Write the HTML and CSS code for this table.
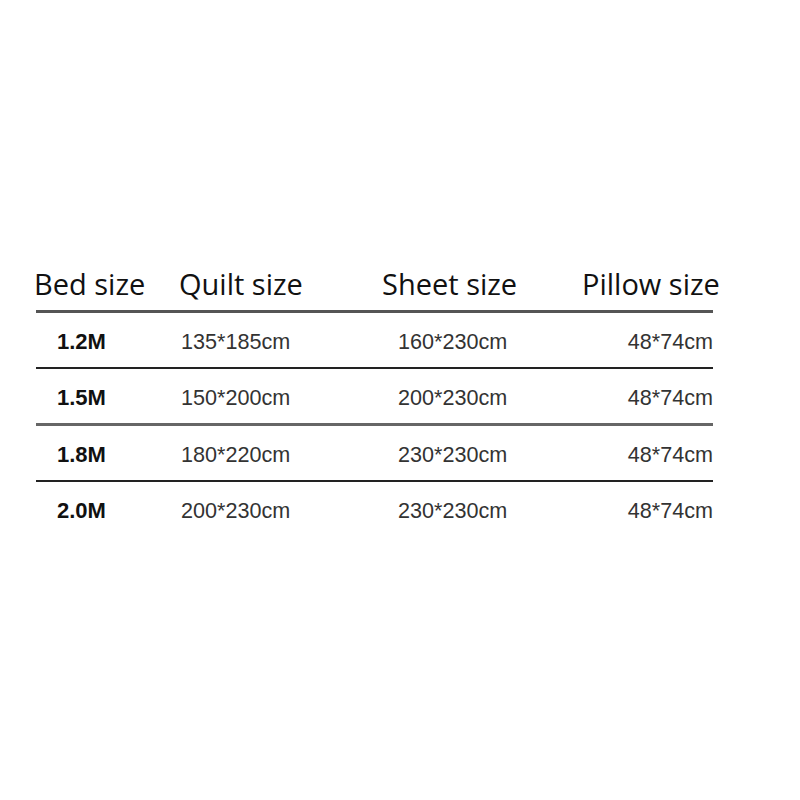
FILE: index.html
```html
<!DOCTYPE html>
<html>
<head>
<meta charset="utf-8">
<link rel="stylesheet" href="styles.css">
</head>
<body>
<div class="table">
  <div class="row head">
    <div class="c1">Bed size</div>
    <div class="c2">Quilt size</div>
    <div class="c3">Sheet size</div>
    <div class="c4">Pillow size</div>
  </div>
  <div class="row data dark">
    <div class="c1">1.2M</div>
    <div class="c2">135*185cm</div>
    <div class="c3">160*230cm</div>
    <div class="c4">48*74cm</div>
  </div>
  <div class="row data grey">
    <div class="c1">1.5M</div>
    <div class="c2">150*200cm</div>
    <div class="c3">200*230cm</div>
    <div class="c4">48*74cm</div>
  </div>
  <div class="row data dark">
    <div class="c1">1.8M</div>
    <div class="c2">180*220cm</div>
    <div class="c3">230*230cm</div>
    <div class="c4">48*74cm</div>
  </div>
  <div class="row data last">
    <div class="c1">2.0M</div>
    <div class="c2">200*230cm</div>
    <div class="c3">230*230cm</div>
    <div class="c4">48*74cm</div>
  </div>
</div>
</body>
</html>
```
FILE: styles.css
```css
html, body {
  margin: 0;
  padding: 0;
  background: #ffffff;
}
.table {
  margin: 266px 0 0 36px;
  width: 677px;
}
.row {
  display: grid;
  grid-template-columns: 145px 203px 200px 1fr;
  white-space: nowrap;
}
.head {
  font-family: "Open Sans", "Noto Sans", sans-serif;
  font-size: 29px;
  line-height: 35px;
  color: #111;
  padding-bottom: 9px;
  border-bottom: 3px solid #555;
}
.head .c1 { margin-left: -2px; }
.head .c2 { margin-left: -2px; }
.head .c3 { margin-left: -2px; }
.head .c4 { margin-left: -2px; }
.data {
  font-family: "Liberation Sans", Arial, sans-serif;
  font-size: 21.6px;
  line-height: 24px;
  color: #333;
  padding: 17px 0 13px;
}
.data.dark { border-bottom: 2px solid #222; }
.data.grey { border-bottom: 3px solid #666; }
.data .c1 {
  font-weight: bold;
  font-size: 22px;
  color: #111;
  padding-left: 21px;
}
.data .c3 { padding-left: 14px; }
.data .c4 { text-align: right; }
```
